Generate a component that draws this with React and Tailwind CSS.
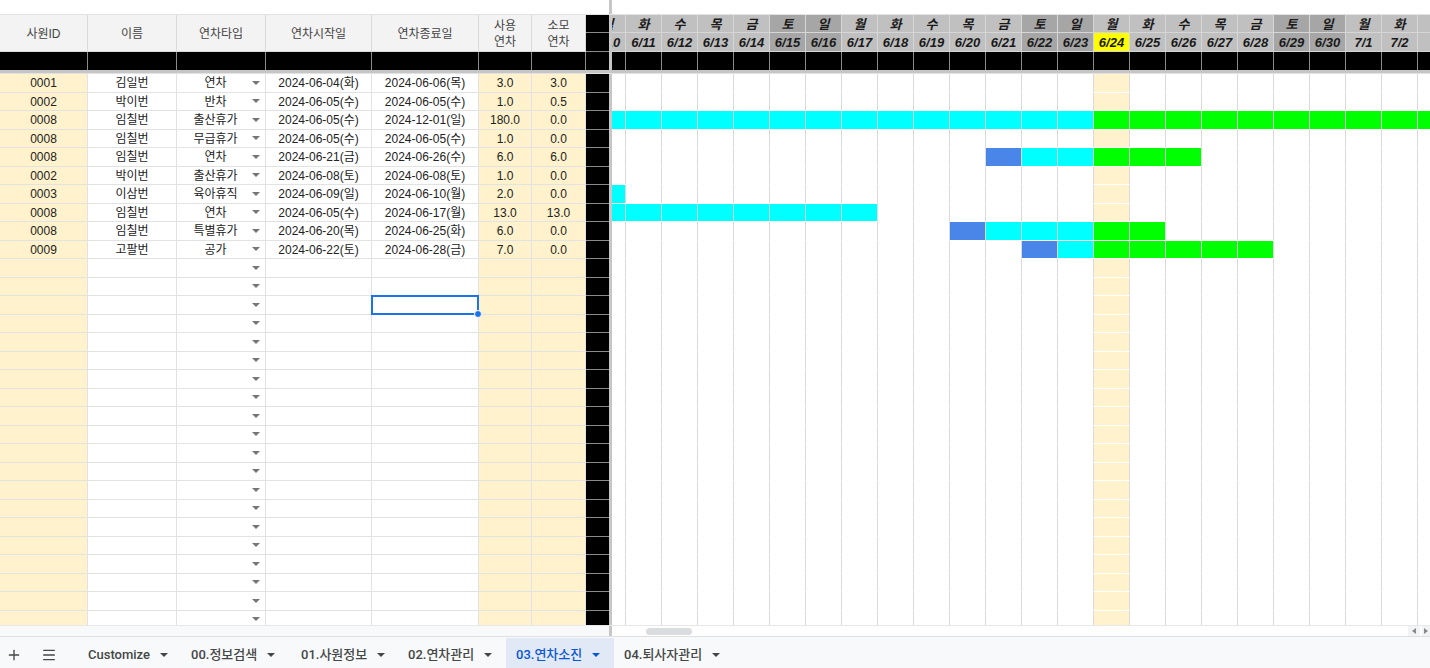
import React from 'react'
import { Plus, Menu } from 'lucide-react'

const rows = [
  ['0001', '김일번', '연차', '2024-06-04(화)', '2024-06-06(목)', '3.0', '3.0'],
  ['0002', '박이번', '반차', '2024-06-05(수)', '2024-06-05(수)', '1.0', '0.5'],
  ['0008', '임칠번', '출산휴가', '2024-06-05(수)', '2024-12-01(일)', '180.0', '0.0'],
  ['0008', '임칠번', '무급휴가', '2024-06-05(수)', '2024-06-05(수)', '1.0', '0.0'],
  ['0008', '임칠번', '연차', '2024-06-21(금)', '2024-06-26(수)', '6.0', '6.0'],
  ['0002', '박이번', '출산휴가', '2024-06-08(토)', '2024-06-08(토)', '1.0', '0.0'],
  ['0003', '이삼번', '육아휴직', '2024-06-09(일)', '2024-06-10(월)', '2.0', '0.0'],
  ['0008', '임칠번', '연차', '2024-06-05(수)', '2024-06-17(월)', '13.0', '13.0'],
  ['0008', '임칠번', '특별휴가', '2024-06-20(목)', '2024-06-25(화)', '6.0', '0.0'],
  ['0009', '고팔번', '공가', '2024-06-22(토)', '2024-06-28(금)', '7.0', '0.0'],
]

const cols = [
  { w: 'w-[88px]', bg: 'bg-[#fff2cc]' },
  { w: 'w-[89px]', bg: 'bg-white' },
  { w: 'w-[89px]', bg: 'bg-white' },
  { w: 'w-[106px]', bg: 'bg-white' },
  { w: 'w-[107px]', bg: 'bg-white' },
  { w: 'w-[53px]', bg: 'bg-[#fff2cc]' },
  { w: 'w-[54px]', bg: 'bg-[#fff2cc]' },
]

const heads = ['사원ID', '이름', '연차타입', '연차시작일', '연차종료일', ['사용', '연차'], ['소모', '연차']]

const names = ['월', '화', '수', '목', '금', '토', '일']
const days = Array.from({ length: 24 }, (_, i) => {
  const d = 10 + i
  return {
    d,
    label: d <= 30 ? `6/${d}` : `7/${d - 30}`,
    name: names[i % 7],
    weekend: i % 7 >= 5,
    today: d === 24,
    hidden: d > 32,
  }
})

// gantt bars per row: [from, to, colour]
const bars = {
  2: [[10, 23, 'bg-[#00ffff]'], [24, 40, 'bg-[#00ff00]']],
  4: [[21, 21, 'bg-[#4a86e8]'], [22, 23, 'bg-[#00ffff]'], [24, 26, 'bg-[#00ff00]']],
  6: [[10, 10, 'bg-[#00ffff]']],
  7: [[10, 17, 'bg-[#00ffff]']],
  8: [[20, 20, 'bg-[#4a86e8]'], [21, 23, 'bg-[#00ffff]'], [24, 25, 'bg-[#00ff00]']],
  9: [[22, 22, 'bg-[#4a86e8]'], [23, 23, 'bg-[#00ffff]'], [24, 28, 'bg-[#00ff00]']],
}

const cellBg = (r, d, today) => {
  const hit = (bars[r] || []).find(([a, b]) => d >= a && d <= b)
  if (hit) return hit[2]
  return today ? 'bg-[#fff2cc]' : 'bg-white'
}

const Caret = ({ color = '#757575' }) => (
  <svg width="8" height="4" viewBox="0 0 8 4">
    <polygon points="0,0 8,0 4,4" fill={color} />
  </svg>
)

const Divider = () => <div className="w-[3px] shrink-0 bg-[#c6c6c6]" />

const DataRow = ({ r }) => {
  const v = rows[r]
  return (
    <div className="flex h-[18.5px]">
      {cols.map((c, ci) => (
        <div
          key={ci}
          className={`${c.w} ${c.bg} relative shrink-0 flex items-center justify-center border-r border-b border-[#e2e2e2] text-[12px] leading-none text-[#222] pt-[1px]`}
        >
          {ci === 2 ? (
            <>
              <span className="flex-1 text-center pl-[2px]">{v ? v[2] : ''}</span>
              <span className="pr-[5px] pb-[1px]"><Caret /></span>
            </>
          ) : (
            v && v[ci]
          )}
          {r === 12 && ci === 4 && (
            <div className="absolute -left-[1px] -top-[1px] w-[108px] h-[19.5px] border-2 border-[#1a73e8] z-10">
              <div className="absolute -right-[5px] -bottom-[5px] w-[8px] h-[8px] rounded-full bg-[#1a73e8] border border-white" />
            </div>
          )}
        </div>
      ))}
      <div className="w-[23px] shrink-0 bg-black border-b border-[#8a8a8a]" />
      <Divider />
      <div className="w-[818px] overflow-hidden">
        <div className="flex -ml-[22px]">
          {days.map((dy) => (
            <div
              key={dy.d}
              className={`w-[36px] h-[18.5px] shrink-0 border-r border-b border-r-[#dadada] border-b-white ${cellBg(r, dy.d, dy.today)}`}
            />
          ))}
        </div>
      </div>
    </div>
  )
}

const tabs = [
  { label: 'Customize', w: 'w-[103px]' },
  { label: '00.정보검색', w: 'w-[110px]' },
  { label: '01.사원정보', w: 'w-[107px]' },
  { label: '02.연차관리', w: 'w-[108px]' },
  { label: '03.연차소진', w: 'w-[108px]', active: true },
  { label: '04.퇴사자관리', w: 'w-[123px]' },
]

export default function App() {
  return (
    <div className="w-[1430px] h-[668px] overflow-hidden bg-white font-['Liberation_Sans','Noto_Sans_CJK_KR',sans-serif]">
      {/* top strip */}
      <div className="flex h-[15px] border-b border-[#e2e2e2]">
        <div className="w-[609px] shrink-0" />
        <Divider />
        <div className="flex-1" />
      </div>

      {/* header */}
      <div className="flex h-[37px]">
        {cols.map((c, ci) => (
          <div
            key={ci}
            className={`${c.w} shrink-0 bg-[#f3f3f3] border-r border-b border-[#dadada] flex flex-col items-center justify-center text-[12px] text-[#444] leading-[16px] pt-[1px]`}
          >
            {Array.isArray(heads[ci]) ? heads[ci].map((t) => <span key={t}>{t}</span>) : heads[ci]}
          </div>
        ))}
        <div className="w-[23px] shrink-0 flex flex-col">
          <div className="h-[18px] bg-black border-b border-[#8a8a8a]" />
          <div className="h-[19px] bg-black border-b border-[#8a8a8a]" />
        </div>
        <Divider />
        <div className="w-[818px] overflow-hidden">
          <div className="flex -ml-[22px]">
            {days.map((dy) => (
              <div key={dy.d} className="w-[36px] shrink-0 flex flex-col text-[13px] font-bold italic text-[#1a1a1a] leading-none">
                <div className={`h-[18px] pt-[2px] flex items-center justify-center border-r border-b border-[#d6d6d6] ${dy.weekend ? 'bg-[#a6a6a6]' : 'bg-[#c0c0c0]'}`}>
                  {dy.hidden ? '' : dy.name}
                </div>
                <div
                  className={`h-[19px] pt-[1px] flex items-center justify-center border-r border-b border-[#d6d6d6] ${
                    dy.today ? 'bg-[#ffff00]' : dy.weekend ? 'bg-[#a6a6a6]' : 'bg-[#c0c0c0]'
                  }`}
                >
                  {dy.hidden ? '' : dy.label}
                </div>
              </div>
            ))}
          </div>
        </div>
      </div>

      {/* black row */}
      <div className="flex h-[18px]">
        {cols.map((c, ci) => (
          <div key={ci} className={`${c.w} shrink-0 bg-black border-r border-[#8a8a8a]`} />
        ))}
        <div className="w-[23px] shrink-0 bg-black" />
        <Divider />
        <div className="w-[818px] overflow-hidden">
          <div className="flex -ml-[22px]">
            {days.map((dy) => (
              <div key={dy.d} className="w-[36px] h-[18px] shrink-0 bg-black border-r border-[#8a8a8a]" />
            ))}
          </div>
        </div>
      </div>

      {/* frozen row divider */}
      <div className="h-[4px] bg-[#c6c6c6] border-b border-[#e2e2e2]" />

      {/* data */}
      <div className="h-[551px] overflow-hidden">
        {Array.from({ length: 30 }, (_, r) => (
          <DataRow key={r} r={r} />
        ))}
      </div>

      {/* scroll strip */}
      <div className="flex h-[12px] border-b border-[#e0e0e0] border-t border-t-[#e8e8e8]">
        <div className="w-[609px] shrink-0 bg-[#f8f9fa]" />
        <Divider />
        <div className="flex-1 flex items-center bg-white">
          <div className="ml-[34px] w-[46px] h-[7px] rounded-full bg-[#dadce0]" />
          <div className="ml-auto flex items-center h-full">
            <div className="w-[12px] h-full bg-[#f1f3f4] flex items-center justify-center">
              <svg width="4" height="6" viewBox="0 0 4 6"><polygon points="4,0 4,6 0,3" fill="#888" /></svg>
            </div>
            <div className="w-[8px] h-full bg-[#f1f3f4] ml-[2px] flex items-center justify-start pl-[2px]">
              <svg width="4" height="6" viewBox="0 0 4 6"><polygon points="0,0 0,6 4,3" fill="#888" /></svg>
            </div>
          </div>
        </div>
      </div>

      {/* sheet tabs */}
      <div className="flex items-stretch h-[31px] pt-[1px] bg-[#f8f9fa] font-['Roboto','Noto_Sans_CJK_KR',sans-serif] text-[13px] font-medium text-[#444746]">
        <div className="pl-[6px] pt-[3px] flex items-center">
          <Plus size={16} strokeWidth={2} color="#444746" />
        </div>
        <div className="ml-[19px] pt-[3px] flex items-center">
          <Menu size={16} strokeWidth={2} color="#444746" />
        </div>
        <div className="ml-[21px] flex">
          {tabs.map((t) => (
            <div
              key={t.label}
              className={`${t.w} flex items-center pl-[10px] pt-[3px] gap-[10px] ${t.active ? 'bg-[#e1e9f7] text-[#0b57d0]' : ''}`}
            >
              <span>{t.label}</span>
              <Caret color={t.active ? '#0b57d0' : '#444746'} />
            </div>
          ))}
        </div>
      </div>
    </div>
  )
}
